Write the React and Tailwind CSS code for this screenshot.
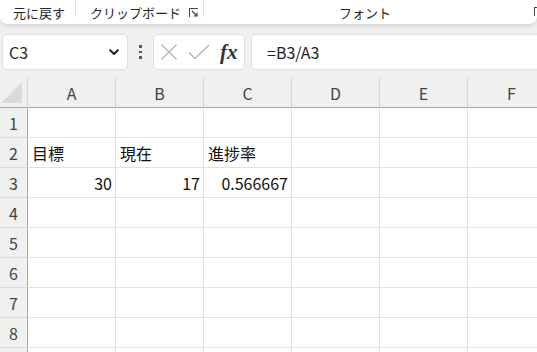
import React from 'react'

const cols = ['A', 'B', 'C', 'D', 'E', 'F']

const cells = {
  2: { A: { v: '目標' }, B: { v: '現在' }, C: { v: '進捗率' } },
  3: { A: { v: '30', right: true }, B: { v: '17', right: true }, C: { v: '0.566667', right: true } },
}

function Ribbon() {
  return (
    <div className="relative h-[24px] bg-white rounded-b-[8px] shadow-[0_2px_4px_rgba(0,0,0,0.12)] flex text-[13px] text-[#262626] leading-none">
      <div className="w-[76px] h-[17px] border-r border-[#e3e3e3] flex items-center pl-[13px] pt-[8px]">元に戻す</div>
      <div className="w-[128px] h-[17px] border-r border-[#e3e3e3] flex items-center pl-[14px] pt-[8px] relative">
        クリップボード
        <svg className="absolute left-[113px] top-[8px]" width="10" height="10" viewBox="0 0 10 10">
          <path d="M0.5 0.5H9M0.5 0.5V9" stroke="#444" strokeWidth="1" fill="none" />
          <path d="M3 3L8 8M8 4.5V8H4.5" stroke="#444" strokeWidth="1.2" fill="none" />
        </svg>
      </div>
      <div className="w-[330px] h-[17px] flex items-center justify-center pt-[8px] pr-[8px]">フォント</div>
      <div className="w-[3px] h-[9px] mt-[7px] border-l border-t border-[#444]"></div>
    </div>
  )
}

function FormulaBar() {
  return (
    <div className="h-[54px] flex items-start pt-[10px] pl-[2px]">
      <div className="w-[126px] h-[36px] bg-white border border-[#e0e0e0] rounded-[5px] flex items-center justify-between pl-[6px] pr-[8px]">
        <span className="text-[16px] text-[#2b2b2b]">C3</span>
        <svg width="10" height="7" viewBox="0 0 10 7">
          <path d="M1.2 1.2L5 5L8.8 1.2" stroke="#222" strokeWidth="2" fill="none" strokeLinecap="round" strokeLinejoin="round" />
        </svg>
      </div>
      <div className="w-[25px] h-[36px] flex flex-col items-center justify-center gap-[3px]">
        <div className="w-[2.5px] h-[2.5px] bg-[#555]"></div>
        <div className="w-[2.5px] h-[2.5px] bg-[#555]"></div>
        <div className="w-[2.5px] h-[2.5px] bg-[#555]"></div>
      </div>
      <div className="w-[92px] h-[36px] bg-white border border-[#e0e0e0] rounded-[5px] flex items-center pl-[6px]">
        <svg width="18" height="18" viewBox="0 0 18 18">
          <path d="M1.5 1.5L16.5 16.5M16.5 1.5L1.5 16.5" stroke="#b4b4b4" strokeWidth="1.3" fill="none" />
        </svg>
        <svg className="ml-[10px]" width="22" height="16" viewBox="0 0 22 16">
          <path d="M1 8.5L7 14.5L21 1" stroke="#b4b4b4" strokeWidth="1.3" fill="none" />
        </svg>
        <span className="ml-[10px] text-[21px] italic font-semibold text-[#333] leading-none" style={{ fontFamily: '"Liberation Serif", serif' }}>fx</span>
      </div>
      <div className="ml-[6px] flex-1 h-[36px] bg-white border-y border-l border-[#e0e0e0] rounded-l-[5px] flex items-center pl-[15px] text-[16px] text-[#222]">
        =B3/A3
      </div>
    </div>
  )
}

function Sheet() {
  return (
    <div className="grid grid-cols-[28px_repeat(6,88px)] w-max">
      <div className="h-[30px] bg-[#f0f0f0] border-r border-b border-b-[#a6a6a6] border-r-[#d8d8d8] relative">
        <div className="absolute right-[5px] bottom-[4px] w-0 h-0 border-l-[21px] border-l-transparent border-b-[21px] border-b-[#dadada]"></div>
      </div>
      {cols.map((c) => (
        <div key={c} className="h-[30px] bg-[#f0f0f0] border-r border-r-[#d8d8d8] border-b border-b-[#a6a6a6] flex items-center justify-center text-[16px] text-[#444]">
          {c}
        </div>
      ))}
      {[1, 2, 3, 4, 5, 6, 7, 8, 9].map((r) => (
        <React.Fragment key={r}>
          <div className="h-[30px] bg-[#f0f0f0] border-r border-r-[#a6a6a6] border-b border-b-[#dcdcdc] flex items-center justify-center text-[16px] text-[#444]">
            {r < 9 ? r : ''}
          </div>
          {cols.map((c) => {
            const cell = cells[r] && cells[r][c]
            return (
              <div key={c} className={`h-[30px] bg-white border-r border-b border-[#e1e1e1] flex items-center text-[16px] text-[#111] ${cell && cell.right ? 'justify-end pr-[3px]' : 'pl-[4px]'}`}>
                {cell ? cell.v : ''}
              </div>
            )
          })}
        </React.Fragment>
      ))}
    </div>
  )
}

export default function App() {
  return (
    <div className="w-[537px] h-[352px] overflow-hidden bg-[#f0f0f0]" style={{ fontFamily: '"Noto Sans CJK JP", "Open Sans", sans-serif' }}>
      <Ribbon />
      <FormulaBar />
      <Sheet />
    </div>
  )
}
